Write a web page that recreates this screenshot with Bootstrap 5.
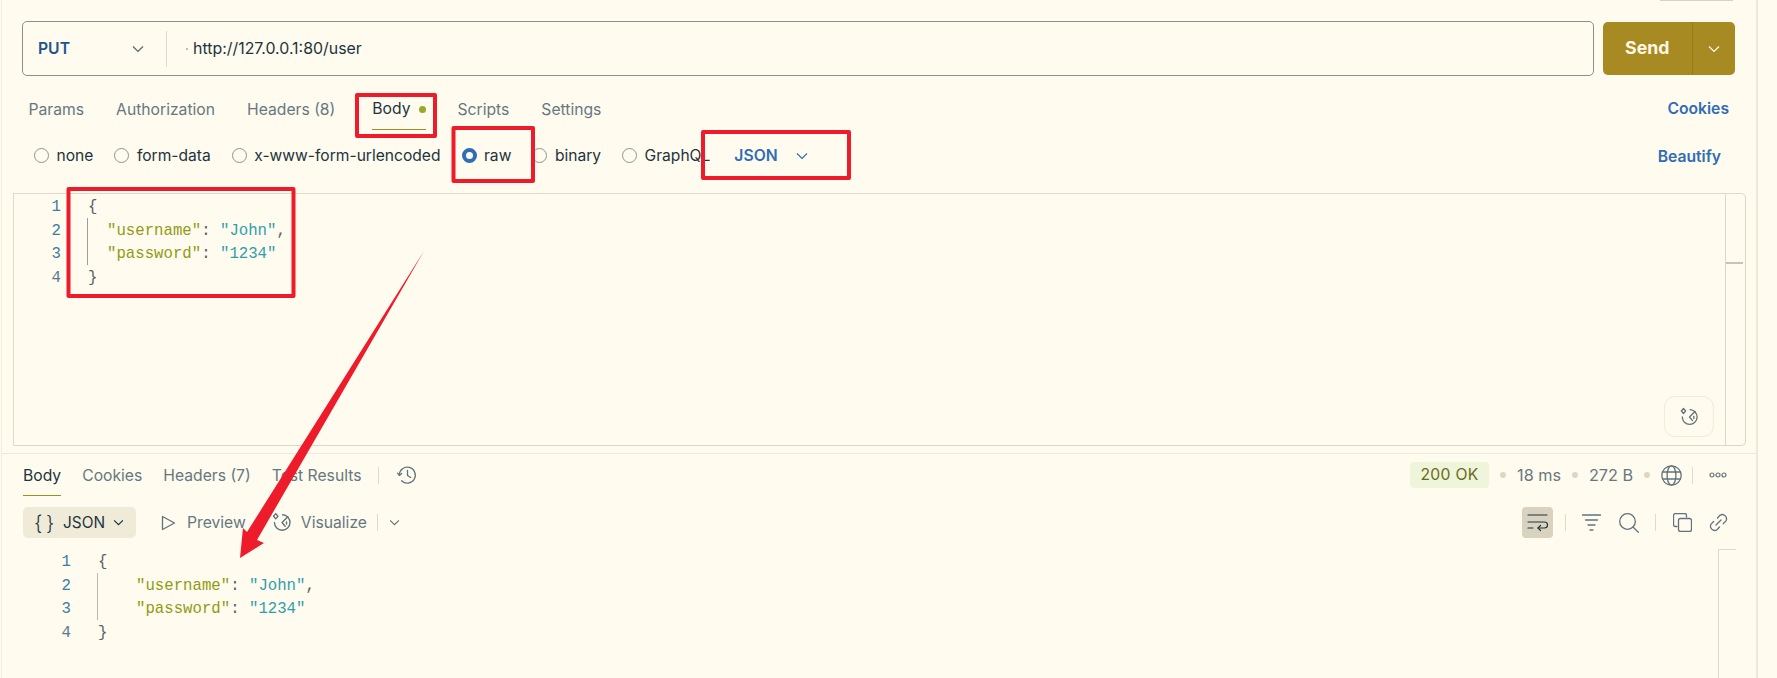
<!DOCTYPE html>
<html lang="en">
<head>
<meta charset="utf-8">
<title>PUT request</title>
<link href="https://cdn.jsdelivr.net/npm/bootstrap@5.3.0/dist/css/bootstrap.min.css" rel="stylesheet">
<style>
:root{--pg:#fffbef;--ln:#e0dac7;--mut:#66787f;--ink:#1d3540;--blu:#2f6db5;--red:#ee1c2a}
html,body{margin:0;background:var(--pg);overflow:hidden}
body{font-family:Inter,"Liberation Sans",sans-serif;font-size:15.7px;color:var(--ink)}
.stage{position:relative;width:1777px;height:678px;overflow:hidden;background:var(--pg)}
.pane{width:1757px;height:678px;border-right:2px solid #efe9d9;box-sizing:border-box;border-left:1px solid #f3edda;margin-left:1px}
.sliver{height:1px;width:73px;background:#d8d2bf;margin-left:1658px}
.reqbar{margin:20px 0 0 20px;gap:9px;align-items:flex-start}
.urlbox{width:1572px;height:55px;border:1px solid #87938c;border-radius:5px;background:var(--pg)}
.method{width:144px;height:36px;padding-left:15px;padding-right:22px;border-right:1px solid #e0dac7;color:#20558c;font-weight:600;font-size:15.7px}
.urltxt{padding-left:19px;font-size:15.9px;color:#22343d}
.urltxt::before{content:"";display:inline-block;width:2px;height:2px;background:#b9c0bd;margin-right:5px;vertical-align:middle}
.sendgrp{width:132px;height:53px;margin-top:1px;border-radius:5px;background:#a88a22;color:#fff8e6;overflow:hidden}
.sendlbl{width:89.5px;border-right:1px solid #98791c;font-weight:700;font-size:17.7px;height:100%}
.sendcar{flex:1;height:100%}
.tabrow{margin:10px 0 0 0;padding:0 27px 0 26.5px;height:44px;justify-content:space-between}
.tabset{gap:32px}
.tabx{height:44px;color:var(--mut);font-size:15.7px;display:flex;align-items:center;padding:3px 0 0;background:none;border:0}
.tabx.on{color:var(--ink);border-bottom:1.5px solid #a88a22;margin:0 -1px 0 5px;padding-top:3px}
.pdot{width:7px;height:7px;border-radius:50%;background:#9aa825;margin-left:9px;display:inline-block}
.lnk{color:var(--blu);font-weight:600;font-size:15.7px;padding-top:2px}
.radrow{height:50px;padding:2px 35px 0 32px;justify-content:space-between}
.radset{gap:21px}
.radit{display:flex;align-items:center;gap:7.5px;color:#22343d;font-size:15.6px;margin:0;padding:0}
.radit input{appearance:none;width:15px;height:15px;margin:0;border:1px solid #8a9695;border-radius:50%;background:transparent;float:none}
.radit input:checked{border:4px solid var(--blu);background:var(--pg)}
.fmt{color:var(--blu);font-weight:600;margin-left:3px;gap:18px;padding-top:0}
.edbox{position:relative;margin:13px 0 0 11px;width:1733px;height:253px;border:1px solid #e0dac7;border-right-color:#dcd6c2;border-bottom-color:#dcd6c2;border-bottom-right-radius:5px;border-top-right-radius:5px;display:flex}
.mono{font-family:"Liberation Mono",monospace;font-size:15.7px}
.nums{color:#3b7ea3;text-align:right}
.ln{height:23.67px;line-height:27.67px;white-space:pre}
.nums .ln:last-child{color:#557a93}
.k{color:#929a12}.s{color:#2fa0ab}.p{color:#5a5f62}
.ednums{width:47px}
.edcode{margin-left:27px;flex:1}
.guide{border-left:1px solid #9a9f98;margin-left:-1px}
.guide .ln{padding-left:19px}
.scrl{width:20px;border-left:1px solid #dcd6c2;position:relative}
.scrl::after{content:"";display:block;height:2px;margin:68px 2px 0 0;background:#c9c3b0}
.magic{width:50px;height:41px;margin:202px 11px 0 0;border:1px solid #f0ebda;border-radius:11px}
.rule{border-top:1px solid #efe9d9;margin-top:7px}
.rspbar{height:42px;padding:0 29px 0 21px;justify-content:space-between;align-items:flex-start}
.rtabs{gap:21px;height:42px}
.rtab{height:42px;padding:11px 0 0;color:var(--mut);font-size:15.7px;background:none;border:0;line-height:21px}
.rtab.on{color:var(--ink);border-bottom:1.5px solid #a88a22}
.vbar{width:1px;height:17px;background:#e0dac7}
.stat{padding-top:8px;color:var(--mut);font-size:16.2px}
.pill200{background:#eff5da;color:#6a6a18;border-radius:4px;width:79px;height:26px;font-size:15.7px;letter-spacing:.3px}
.mdot{width:6px;height:6px;border-radius:50%;background:#dcd6c2;margin:0 11px}
.vb2{margin-left:10px;margin-right:16px}
.tbar{height:31px;margin-top:11px;padding:0 28px 0 21px;justify-content:space-between}
.jbtn{width:113px;height:31px;background:#f0ead9;border-radius:5px;color:var(--ink);padding:0 0 0 11px;font-size:15.4px}
.bra{display:inline-block;width:20px;font-size:20px;font-weight:300;white-space:nowrap;word-spacing:-2px;margin-right:9px;line-height:1}
.ghost{color:var(--mut);font-size:15.7px}
.wrapon{width:31px;height:31px;background:#d9d2bf;border-radius:4px}
.rbody{margin-top:11px;height:129px;justify-content:space-between;padding-right:20px}
.rnums{width:61px;margin-left:8px}
.rcode{margin-left:27px}
.rguide{border-left:1px solid #b8b9ad;margin-left:-1px}
.rguide .ln{padding-left:38px}
.track{width:18px;border-left:1px solid #e0dac7;border-top:1px solid #e0dac7}
.ann{position:absolute;left:0;top:0;pointer-events:none}
svg{display:block;flex:none}
.ic{fill:none;stroke:#5f747c;stroke-width:1.3;stroke-linecap:round;stroke-linejoin:round}
.hbar1{margin:13px 0 0 -4px}.hist{margin:11px 0 0 -3px}
.pv{margin-left:25px}.pvt{margin-left:11px}.vz{margin-left:25px}.vzt{margin-left:9px}.vb3{margin-left:10px}.vc{margin-left:11px}
.tb1{margin-left:12px}.tb2{margin-left:16px}.tb3{margin-left:18px}.tb4{margin-left:16px}.tb5{margin-left:17px}.tb6{margin-left:17px}
</style>
</head>
<body>
<div class="stage">
<div class="pane">
  <div class="sliver"></div>
  <div class="reqbar d-flex">
    <div class="urlbox d-flex align-items-center">
      <div class="method d-flex align-items-center justify-content-between">PUT
        <svg width="12" height="8" viewBox="0 0 12 8"><path d="M1 1.5 6 6.5 11 1.5" fill="none" stroke="#54686f" stroke-width="1.2"/></svg>
      </div>
      <div class="urltxt">http://127.0.0.1:80/user</div>
    </div>
    <div class="sendgrp d-flex align-items-center">
      <div class="sendlbl d-flex align-items-center justify-content-center">Send</div>
      <div class="sendcar d-flex align-items-center justify-content-center">
        <svg width="12" height="8" viewBox="0 0 12 8"><path d="M1 1.5 6 6.5 11 1.5" fill="none" stroke="#fff8e6" stroke-width="1.2"/></svg>
      </div>
    </div>
  </div>

  <div class="tabrow d-flex align-items-center">
    <nav class="tabset d-flex">
      <span class="tabx">Params</span>
      <span class="tabx">Authorization</span>
      <span class="tabx">Headers (8)</span>
      <span class="tabx on">Body<i class="pdot"></i></span>
      <span class="tabx">Scripts</span>
      <span class="tabx">Settings</span>
    </nav>
    <span class="lnk">Cookies</span>
  </div>

  <div class="radrow d-flex align-items-center">
    <div class="radset d-flex align-items-center">
      <label class="radit"><input type="radio" name="b">none</label>
      <label class="radit"><input type="radio" name="b">form-data</label>
      <label class="radit"><input type="radio" name="b">x-www-form-urlencoded</label>
      <label class="radit"><input type="radio" name="b" checked>raw</label>
      <label class="radit"><input type="radio" name="b">binary</label>
      <label class="radit"><input type="radio" name="b">GraphQL</label>
      <span class="fmt d-flex align-items-center">JSON
        <svg width="12" height="8" viewBox="0 0 12 8"><path d="M1 1.5 6 6.5 11 1.5" fill="none" stroke="#2f6db5" stroke-width="1.2"/></svg>
      </span>
    </div>
    <span class="lnk">Beautify</span>
  </div>

  <div class="edbox mono">
    <div class="ednums nums">
      <div class="ln">1</div><div class="ln">2</div><div class="ln">3</div><div class="ln">4</div>
    </div>
    <div class="edcode">
      <div class="ln p">{</div>
      <div class="guide">
        <div class="ln"><span class="k">"username"</span><span class="p">: </span><span class="s">"John"</span><span class="p">,</span></div>
        <div class="ln"><span class="k">"password"</span><span class="p">: </span><span class="s">"1234"</span></div>
      </div>
      <div class="ln p">}</div>
    </div>
    <div class="magic d-flex align-items-center justify-content-center">
      <svg class="ic" width="20" height="20" viewBox="0 0 20 20"><path d="M11 2.600A7.400 7.400 0 1 1 3.300 10"/><path d="M16 4.500 10.500 10l3 3.600"/><path d="M14.800 9.500v2"/><path d="M4.500 1.500 6.600 4 4.500 6.500 2.400 4z"/></svg>
    </div>
    <div class="scrl"></div>
  </div>

  <div class="rule"></div>
  <div class="rspbar d-flex">
    <div class="rtabs d-flex align-items-start">
      <span class="rtab on">Body</span>
      <span class="rtab">Cookies</span>
      <span class="rtab">Headers (7)</span>
      <span class="rtab">Test Results</span>
      <span class="vbar hbar1"></span>
      <svg class="ic hist" width="20" height="20" viewBox="0 0 20 20"><path d="M2.300 10A8 8 0 1 1 4.600 15.800"/><path d="M0.500 8.200 2.400 10.400 4.600 8.400"/><path d="M10.500 5.500v5l3.300 2"/></svg>
    </div>
    <div class="stat d-flex align-items-center">
      <span class="pill200 d-flex align-items-center justify-content-center">200 OK</span>
      <i class="mdot"></i><span>18 ms</span><i class="mdot"></i><span>272 B</span><i class="mdot"></i>
      <svg class="ic" width="21" height="21" viewBox="0 0 21 21"><circle cx="10.500" cy="10.500" r="9.700"/><ellipse cx="10.500" cy="10.500" rx="4.400" ry="9.700"/><path d="M1.800 7h17.400M1.800 14h17.400"/></svg>
      <span class="vbar vb2"></span>
      <svg width="18" height="6" viewBox="0 0 18 6"><g fill="none" stroke="#5f747c" stroke-width="1.2"><circle cx="3" cy="3" r="2"/><circle cx="9" cy="3" r="2"/><circle cx="15" cy="3" r="2"/></g></svg>
    </div>
  </div>

  <div class="tbar d-flex align-items-center">
    <div class="d-flex align-items-center">
      <div class="jbtn d-flex align-items-center"><span class="bra">{ }</span>JSON
        <svg class="ms-2" width="11" height="7" viewBox="0 0 12 8"><path d="M1 1.500 6 6.500 11 1.500" fill="none" stroke="#1d3540" stroke-width="1.4"/></svg>
      </div>
      <svg class="ic pv" width="15" height="16" viewBox="0 0 15 16"><path d="M1.500 1.500v13l12-6.500z"/></svg>
      <span class="ghost pvt">Preview</span>
      <svg class="ic vz" width="21" height="21" viewBox="0 0 20 20"><path d="M11 2.600A7.400 7.400 0 1 1 3.300 10"/><path d="M16 4.500 10.500 10l3 3.600"/><path d="M14.800 9.500v2"/><path d="M4.500 1.500 6.600 4 4.500 6.500 2.400 4z"/></svg>
      <span class="ghost vzt">Visualize</span>
      <span class="vbar vb3"></span>
      <svg class="vc" width="11" height="7" viewBox="0 0 12 8"><path d="M1 1.500 6 6.500 11 1.500" fill="none" stroke="#5f747c" stroke-width="1.300"/></svg>
    </div>
    <div class="d-flex align-items-center">
      <div class="wrapon d-flex align-items-center justify-content-center">
        <svg width="21" height="19" viewBox="0 0 21 19" fill="none" stroke="#1d3540" stroke-width="1.2" stroke-linecap="round" stroke-linejoin="round"><path d="M1 2h19M1 9h16.500a2.800 2.800 0 0 1 0 6H11"/><path d="M13.500 12.500 11 15l2.500 2.500"/><path d="M1 15h5"/></svg>
      </div>
      <span class="vbar tb1"></span>
      <svg class="ic tb2" width="19" height="17" viewBox="0 0 19 17"><path d="M.5 1h18M3.500 6h12M6 11h7M8 16h3"/></svg>
      <svg class="ic tb3" width="20" height="20" viewBox="0 0 20 20"><circle cx="8.500" cy="8.500" r="7.800"/><path d="M14 14l5.300 5.300"/></svg>
      <span class="vbar tb4"></span>
      <svg class="ic tb5" width="19" height="19" viewBox="0 0 19 19"><path d="M4 13.500H2.500a2 2 0 0 1-2-2V2.500a2 2 0 0 1 2-2h9a2 2 0 0 1 2 2V4"/><rect x="5.500" y="5.500" width="13" height="13" rx="2"/></svg>
      <svg class="ic tb6" width="19" height="19" viewBox="0 0 19 19"><path d="M7 12 12 7"/><path d="M8.500 5 11 2.300a4.200 4.200 0 0 1 5.800 5.800L14.300 10.500"/><path d="M10.500 14 8 16.700a4.200 4.200 0 0 1-5.800-5.800L4.700 8.500"/></svg>
    </div>
  </div>

  <div class="rbody d-flex mono">
    <div class="d-flex">
      <div class="rnums nums">
        <div class="ln">1</div><div class="ln">2</div><div class="ln">3</div><div class="ln">4</div>
      </div>
      <div class="rcode">
        <div class="ln p">{</div>
        <div class="rguide">
          <div class="ln"><span class="k">"username"</span><span class="p">: </span><span class="s">"John"</span><span class="p">,</span></div>
          <div class="ln"><span class="k">"password"</span><span class="p">: </span><span class="s">"1234"</span></div>
        </div>
        <div class="ln p">}</div>
      </div>
    </div>
    <div class="track"></div>
  </div>
</div>

<svg class="ann" width="1777" height="678" viewBox="0 0 1777 678">
  <g fill="none" stroke="#ee1c2a" stroke-width="4" stroke-linejoin="round">
    <rect x="357" y="95" width="78" height="41"/>
    <rect x="453.500" y="128" width="79.500" height="53"/>
    <rect x="703" y="132" width="146" height="46"/>
    <rect x="68.500" y="189" width="225" height="107"/>
  </g>
  <path d="M424 251 257 540 264 543 240 558 243 528 247 532Z" fill="#ee1c2a"/>
</svg>
</div>
</body>
</html>
